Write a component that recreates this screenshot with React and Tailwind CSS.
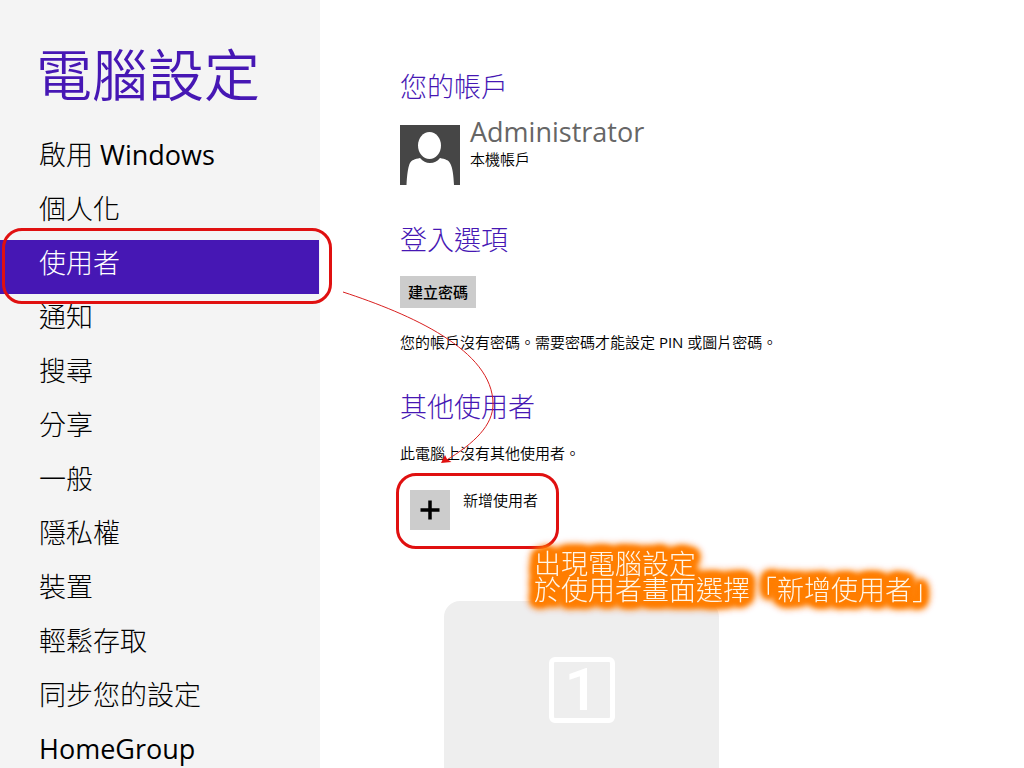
const NAV_ITEMS = [
  '啟用 Windows',
  '個人化',
  '使用者',
  '通知',
  '搜尋',
  '分享',
  '一般',
  '隱私權',
  '裝置',
  '輕鬆存取',
  '同步您的設定',
  'HomeGroup',
];

function Sidebar({ active }) {
  return (
    <aside className="w-80 shrink-0 bg-[#f4f4f4] pt-[42px]">
      <h1 className="pl-9 text-[56px] leading-[64px] font-[350] text-[#4617b4]">電腦設定</h1>
      <nav className="mt-[26px] pr-px">
        {NAV_ITEMS.map((item) => (
          <a
            key={item}
            href="#"
            className={
              item === active
                ? 'relative block h-[54px] bg-[#4617b4] pl-[39px] text-[27px] leading-[46px] font-light text-white'
                : 'block h-[54px] pl-[39px] text-[27px] leading-[46px] font-light text-black'
            }
          >
            {/[A-Z]/.test(item) ? <NavLabel text={item} /> : item}
            {item === active && (
              <span className="absolute -top-3 -right-[13px] -bottom-2.5 left-0.5 z-10 rounded-[20px] border-3 border-[#e01010]" />
            )}
          </a>
        ))}
      </nav>
    </aside>
  );
}

// latin words are set in the regular weight, the rest stays light
function NavLabel({ text }) {
  return text.split(' ').map((word, i) => (
    <span key={word} className={/[A-Z]/.test(word) ? 'font-normal' : 'font-light'}>
      {i > 0 && ' '}
      {word}
    </span>
  ));
}

function Avatar() {
  return (
    <svg viewBox="0 0 60 60" className="size-[60px] shrink-0" aria-hidden="true">
      <rect width="60" height="60" fill="#464646" />
      <ellipse cx="29.5" cy="20.5" rx="11.5" ry="13.5" fill="#fff" />
      <path
        d="M6.500 60C7 50 8 43 9.500 39C11 35 15 34 20 33C23 36.500 26 38 30 38C34 38 37.500 36.500 40 33C45 34 49 35 50.500 39C52.500 43 53.500 50 54 60Z"
        fill="#fff"
      />
    </svg>
  );
}

function SectionTitle({ children }) {
  return <h2 className="text-[27px] leading-9 font-light text-[#4617b4]">{children}</h2>;
}

function Arrow() {
  return (
    <svg
      viewBox="0 0 160 180"
      className="pointer-events-none absolute top-[288px] left-[340px] z-10 h-[180px] w-40"
      fill="none"
      aria-hidden="true"
    >
      <path d="M3 4C70 26 153 62 153 116C153 137 135 155 105 173" stroke="#d92020" />
      <path d="M101 175L105 167L107 171L111.500 174Z" fill="#e01010" />
    </svg>
  );
}

export default function App() {
  return (
    <div className="relative flex h-screen overflow-hidden bg-white font-['Open_Sans','Noto_Sans_CJK_TC',sans-serif] text-black">
      <Sidebar active="使用者" />

      <main className="flex-1 pt-[69px] pl-20">
        <section>
          <SectionTitle>您的帳戶</SectionTitle>
          <div className="mt-5 flex gap-2.5">
            <Avatar />
            <div className="-mt-2">
              <div className="text-[27px] leading-[30px] text-[#666]">Administrator</div>
              <div className="text-[15px] leading-6 font-[350]">本機帳戶</div>
            </div>
          </div>
        </section>

        <section className="mt-[37px]">
          <SectionTitle>登入選項</SectionTitle>
          <button className="mt-[18px] block h-8 bg-[#ccc] px-2 text-[15px] leading-5 font-medium">建立密碼</button>
          <p className="mt-6 text-[15px] leading-5 font-[350]">
            您的帳戶沒有密碼。需要密碼才能設定 <span className="font-normal">PIN</span> 或圖片密碼。
          </p>
        </section>

        <section className="mt-[37px]">
          <SectionTitle>其他使用者</SectionTitle>
          <p className="mt-[18px] text-[15px] leading-5 font-[350]">此電腦上沒有其他使用者。</p>
          <button className="mt-2.5 -ml-1 flex items-start gap-[13px] rounded-[20px] border-3 border-[#e01010] pt-3.5 pr-[18px] pb-4 pl-[11px]">
            <span className="flex size-10 items-center justify-center bg-[#ccc]">
              <svg viewBox="0 0 20 20" className="size-5" stroke="#000" strokeWidth="3.5" aria-hidden="true">
                <path d="M10 0.500V19.500M0.500 10H19.500" />
              </svg>
            </span>
            <span className="text-[15px] leading-5 font-[350]">新增使用者</span>
          </button>
        </section>

        <div className="mt-[52px] ml-11 flex h-72 w-[275px] justify-center rounded-2xl bg-[#eee] pt-14">
          <span className="flex size-[66px] items-center justify-center rounded-md border-5 border-white font-[Roboto,sans-serif] text-[60px] leading-none font-medium text-white">
            1
          </span>
        </div>
      </main>

      <Arrow />

      <p className="absolute top-[551px] left-[534px] text-[27px] leading-[26px] font-light text-[#fff6e8] [filter:drop-shadow(0_0_2px_#ff7f00)_drop-shadow(0_0_3px_#ff7f00)_drop-shadow(0_0_3px_#ff7f00)_drop-shadow(0_0_3px_#ff7f00)_drop-shadow(0_0_2px_#ff7f00)_drop-shadow(0_0_1px_#ff7f00)]">
        出現電腦設定
        <br />
        於使用者畫面選擇「新增使用者」
      </p>
    </div>
  );
}
